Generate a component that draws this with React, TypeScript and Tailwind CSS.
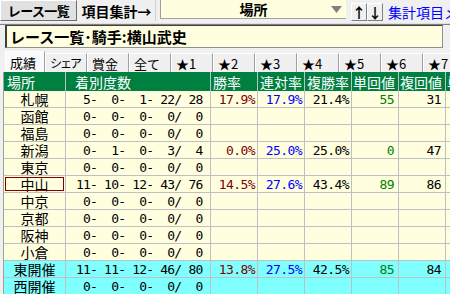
import React from "react";

type Row = {
  name: string;
  d: string;
  w?: string;
  r?: string;
  f?: string;
  t?: string;
  fk?: string;
  cyan?: boolean;
  focus?: boolean;
};

const Z = " 0-  0-  0-  0/  0";

const rows: Row[] = [
  { name: "札幌", d: " 5-  0-  1- 22/ 28", w: "17.9%", r: "17.9%", f: "21.4%", t: "55", fk: "31" },
  { name: "函館", d: Z },
  { name: "福島", d: Z },
  { name: "新潟", d: " 0-  1-  0-  3/  4", w: "0.0%", r: "25.0%", f: "25.0%", t: "0", fk: "47" },
  { name: "東京", d: Z },
  { name: "中山", d: "11- 10- 12- 43/ 76", w: "14.5%", r: "27.6%", f: "43.4%", t: "89", fk: "86", focus: true },
  { name: "中京", d: Z },
  { name: "京都", d: Z },
  { name: "阪神", d: Z },
  { name: "小倉", d: Z },
  { name: "東開催", d: "11- 11- 12- 46/ 80", w: "13.8%", r: "27.5%", f: "42.5%", t: "85", fk: "84", cyan: true },
  { name: "西開催", d: Z, cyan: true },
];

const tabs = ["シェア", "賞金", "全て", "★1", "★2", "★3", "★4", "★5", "★6", "★7"];

const mono = "font-['DejaVu_Sans_Mono',monospace] text-[13px] tracking-[-0.6px] whitespace-pre";

export default function App() {
  return (
    <div className="w-[450px] h-[294px] overflow-hidden bg-[#f0f0f0] font-['Noto_Sans_CJK_JP',sans-serif] text-black">
      {/* toolbar */}
      <div className="flex items-start h-[23px] bg-[#f0f0f0]">
        <div className="w-[77px] h-[21px] shrink-0 flex items-center justify-center bg-[#e1e1e1] border-t border-l border-t-white border-l-white border-r border-b border-r-[#6d6d6d] border-b-[#6d6d6d] text-[13px] font-bold tracking-[-0.6px] leading-none">
          レース一覧
        </div>
        <div className="ml-[1px] w-[78px] h-[21px] shrink-0 flex items-center justify-center border-r border-[#d0d0d0] text-[14px] font-bold leading-none">
          項目集計→
        </div>
        <div className="ml-[4px] relative w-[186px] h-[19px] shrink-0 bg-[#ffffe0] border-l border-b border-[#a0a0a0] flex items-center justify-center">
          <span className="text-[14px] font-bold leading-none">場所</span>
          <svg className="absolute left-[170px] top-[6px]" width="11" height="7" viewBox="0 0 11 7">
            <polygon points="0,0 11,0 5.5,7" fill="#808080" />
          </svg>
        </div>
        <div className="ml-[5px] mt-[3px] flex shrink-0">
          <div className="w-[16px] h-[18px] flex items-center justify-center bg-[#f0f0f0] border-t border-l border-white border-r border-b border-r-[#808080] border-b-[#808080] text-[14px] font-bold leading-none">↑</div>
          <div className="w-[16px] h-[18px] flex items-center justify-center bg-[#f0f0f0] border-t border-l border-white border-r border-b border-r-[#808080] border-b-[#808080] text-[14px] font-bold leading-none">↓</div>
        </div>
        <div className="ml-[5px] mt-[3px] h-[17px] flex items-center whitespace-nowrap text-[14px] leading-none text-[#0000ff]">
          集計項目メニュー
        </div>
      </div>
      <div className="h-[1px] bg-[#e0e0e0]" />
      <div className="h-[1px] bg-[#808080]" />
      {/* title */}
      <div className="pl-[5px] h-[23px] flex">
        <div className="w-[438px] h-[23px] bg-[#ffffe0] border-l-2 border-l-[#404040] border-t border-t-[#404040] border-r border-b border-r-[#909090] border-b-[#909090] flex items-center pl-[3px]">
          <span className="text-[15px] font-bold leading-none whitespace-nowrap">レース一覧･騎手:横山武史</span>
        </div>
      </div>
      {/* tabs */}
      <div className="h-[24px] flex items-end pl-[5px] whitespace-nowrap">
        <div className="w-[40px] h-[21px] shrink-0 bg-[#fafafa] border-t border-l border-white border-r border-r-[#a0a0a0] flex items-center pl-[4px] text-[13px] leading-none">
          成績
        </div>
        {tabs.map((t) => (
          <div
            key={t}
            className="w-[42px] h-[19px] shrink-0 overflow-hidden bg-[#f0f0f0] border-t border-l border-white border-r border-r-[#a0a0a0] flex items-center pl-[4px] text-[13px] leading-none"
          >
            {t === "シェア" ? <span className="text-[12px] tracking-[-2px]">シェア</span> : t}
          </div>
        ))}
      </div>
      {/* grid */}
      <div className="pl-[3px]">
        <div className="border-l border-[#a0a0a0] w-[520px]">
          <div className="flex h-[19px] bg-[#008040] text-white text-[14px] leading-none">
            <div className="w-[62px] border-r border-[#c0c0c0] flex items-center pl-[3px]">場所</div>
            <div className="w-[145px] border-r border-[#c0c0c0] flex items-center pl-[9px]">着別度数</div>
            <div className="w-[47px] border-r border-[#c0c0c0] flex items-center pl-[2px]">勝率</div>
            <div className="w-[47px] border-r border-[#c0c0c0] flex items-center pl-[2px]">連対率</div>
            <div className="w-[47px] border-r border-[#c0c0c0] flex items-center pl-[2px]">複勝率</div>
            <div className="w-[47px] border-r border-[#c0c0c0] flex items-center pl-[1px]">単回値</div>
            <div className="w-[47px] border-r border-[#c0c0c0] flex items-center pl-[1px]">複回値</div>
            <div className="w-[70px] flex items-center pl-[1px]">単勝人気</div>
          </div>
          {rows.map((r) => (
            <div key={r.name} className={`flex h-[17px] ${r.cyan ? "bg-[#80ffff]" : "bg-[#ffffe0]"}`}>
              <div className="relative w-[62px] border-r border-b border-[#c0c0c0] flex items-center justify-center text-[14px] leading-[14px]">
                <span className="leading-[14px]">{r.name}</span>
                {r.focus && <div className="absolute inset-[1px] border border-[#800000]" />}
              </div>
              <div className="w-[145px] border-r border-b border-[#c0c0c0] flex items-center pl-[10px] pt-[1px] font-['DejaVu_Sans_Mono',monospace] text-[13px] tracking-[-0.8px] whitespace-pre leading-none">
                {r.d}
              </div>
              <div className={`w-[47px] border-r border-b border-[#c0c0c0] flex items-center justify-end pr-[2px] pt-[1px] leading-none text-[#800000] ${mono}`}>{r.w ?? ""}</div>
              <div className={`w-[47px] border-r border-b border-[#c0c0c0] flex items-center justify-end pr-[2px] pt-[1px] leading-none text-[#0000ff] ${mono}`}>{r.r ?? ""}</div>
              <div className={`w-[47px] border-r border-b border-[#c0c0c0] flex items-center justify-end pr-[2px] pt-[1px] leading-none text-black ${mono}`}>{r.f ?? ""}</div>
              <div className={`w-[47px] border-r border-b border-[#c0c0c0] flex items-center justify-end pr-[4px] pt-[1px] leading-none text-[#008000] ${mono}`}>{r.t ?? ""}</div>
              <div className={`w-[47px] border-r border-b border-[#c0c0c0] flex items-center justify-end pr-[4px] pt-[1px] leading-none text-black ${mono}`}>{r.fk ?? ""}</div>
              <div className="w-[70px] border-b border-[#c0c0c0]" />
            </div>
          ))}
        </div>
      </div>
    </div>
  );
}
